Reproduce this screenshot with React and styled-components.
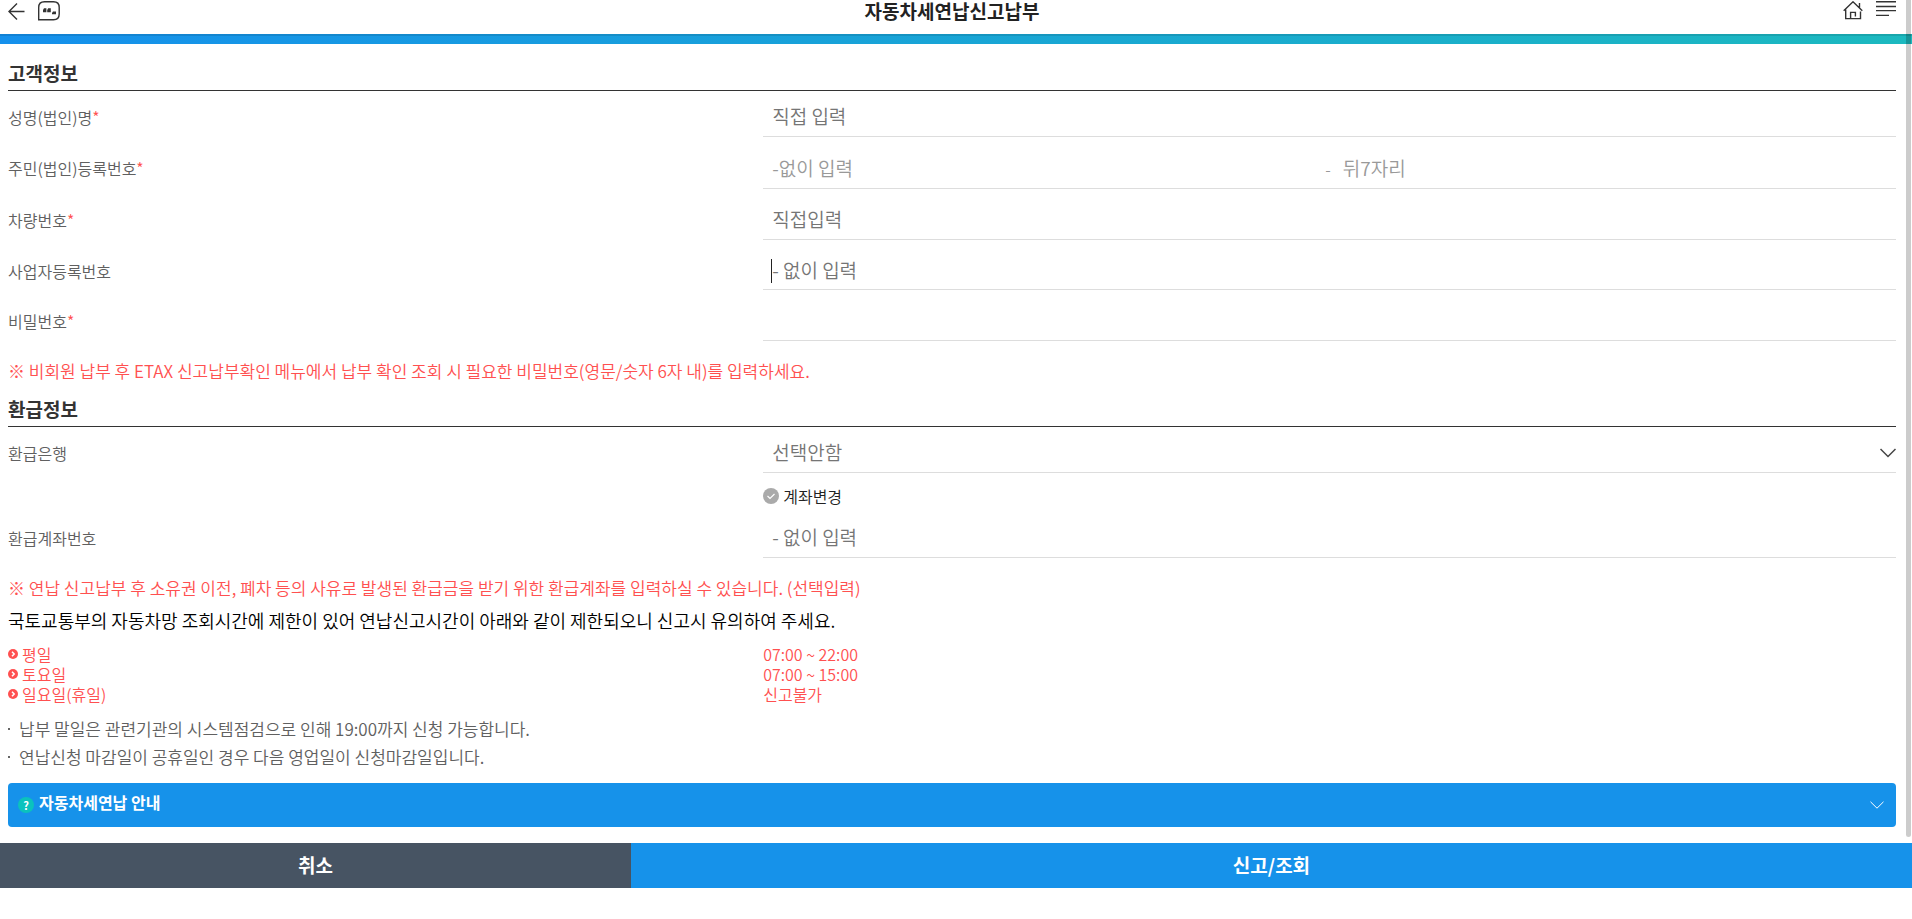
import { useState } from 'react';
import styled, { createGlobalStyle } from 'styled-components';

const App = () => {
    const [changeAccount, setChangeAccount] = useState(false);

    return (
        <>
            <GlobalStyle />
            <Header>
                <HeaderGroup>
                    <IconButton type="button" aria-label="뒤로">
                        <svg width="17" height="19" viewBox="0 0 17 19">
                            <path d="M16.5 9.5H1M9 1.5L1 9.5L9 17.5" />
                        </svg>
                    </IconButton>
                    <IconButton type="button" aria-label="상담">
                        <svg width="22" height="20" viewBox="0 0 22 20">
                            <path d="M.7 18.8V6.5Q.7 .8 6.5 .8H15.5Q21.2 .8 21.2 6.5V13Q21.2 18.8 15.5 18.8Z" />
                            <path className="fill" d="M5 9L6 7.2H8.4V11.2H5ZM9.2 9L10.2 7.2H12.8V11.2H9.2ZM14 12L15 10.4H18V13.2H14Z" />
                        </svg>
                    </IconButton>
                </HeaderGroup>
                <h1>자동차세연납신고납부</h1>
                <HeaderGroup $end>
                    <IconButton type="button" aria-label="홈">
                        <svg width="20" height="20" viewBox="0 0 20 20">
                            <path d="M.7 9.8L10 .8L19.3 9.8M2.7 8.4V17.6H17.5V10.5M7.6 17.6V11.4H12.4V15.5M16.5 7V2" />
                        </svg>
                    </IconButton>
                    <IconButton type="button" aria-label="메뉴">
                        <svg width="20" height="20" viewBox="0 0 20 20">
                            <path d="M0 .7H20M0 5.5H20M0 9.6H20M0 14.4H13" />
                        </svg>
                    </IconButton>
                </HeaderGroup>
            </Header>
            <GradientBar />

            <Content>
                <SectionTitle>고객정보</SectionTitle>
                <Fields>
                    <Row>
                        <Label htmlFor="name">성명(법인)명<em>*</em></Label>
                        <Field><Input id="name" placeholder="직접 입력" /></Field>
                    </Row>
                    <Row $height="40px">
                        <Label htmlFor="regFront">주민(법인)등록번호<em>*</em></Label>
                        <Field>
                            <Input id="regFront" placeholder="-없이 입력" $light />
                            <Dash>-</Dash>
                            <Input aria-label="뒤7자리" placeholder="뒤7자리" $light />
                        </Field>
                    </Row>
                    <Row>
                        <Label htmlFor="carNo">차량번호<em>*</em></Label>
                        <Field><Input id="carNo" placeholder="직접입력" /></Field>
                    </Row>
                    <Row $height="38px">
                        <Label htmlFor="bizNo">사업자등록번호</Label>
                        <Field>
                            <Caret />
                            <Input id="bizNo" placeholder="- 없이 입력" />
                        </Field>
                    </Row>
                    <Row>
                        <Label htmlFor="pw">비밀번호<em>*</em></Label>
                        <Field><Input id="pw" type="password" /></Field>
                    </Row>
                </Fields>
                <Notice>※ 비회원 납부 후 ETAX 신고납부확인 메뉴에서 납부 확인 조회 시 필요한 비밀번호(영문/숫자 6자 내)를 입력하세요.</Notice>

                <SectionTitle>환급정보</SectionTitle>
                <Fields>
                    <Row>
                        <Label htmlFor="bank">환급은행</Label>
                        <Field>
                            <Select id="bank">
                                <option>선택안함</option>
                            </Select>
                            <SelectArrow width="16" height="10" viewBox="0 0 16 10">
                                <path d="M.5 1L8 8.5L15.5 1" />
                            </SelectArrow>
                        </Field>
                    </Row>
                </Fields>
                <CheckLabel>
                    <input
                        type="checkbox"
                        checked={changeAccount}
                        onChange={(e) => setChangeAccount(e.target.checked)}
                    />
                    <CheckIcon $on={changeAccount} width="16" height="16" viewBox="0 0 16 16">
                        <circle cx="8" cy="8" r="8" />
                        <path d="M4.5 8L7 10.4L11.5 6" />
                    </CheckIcon>
                    계좌변경
                </CheckLabel>
                <Row>
                    <Label htmlFor="accountNo">환급계좌번호</Label>
                    <Field><Input id="accountNo" placeholder="- 없이 입력" /></Field>
                </Row>
                <Notice>※ 연납 신고납부 후 소유권 이전, 폐차 등의 사유로 발생된 환급금을 받기 위한 환급계좌를 입력하실 수 있습니다. (선택입력)</Notice>

                <Guide>국토교통부의 자동차망 조회시간에 제한이 있어 연납신고시간이 아래와 같이 제한되오니 신고시 유의하여 주세요.</Guide>
                <Hours>
                    {HOURS.map(([day, time]) => (
                        <div key={day}>
                            <dt>
                                <svg width="10" height="10" viewBox="0 0 10 10">
                                    <circle cx="5" cy="5" r="5" />
                                    <path d="M4 2.8L6.2 5L4 7.2" />
                                </svg>
                                {day}
                            </dt>
                            <dd>{time}</dd>
                        </div>
                    ))}
                </Hours>
                <Notes>
                    <li>납부 말일은 관련기관의 시스템점검으로 인해 19:00까지 신청 가능합니다.</li>
                    <li>연납신청 마감일이 공휴일인 경우 다음 영업일이 신청마감일입니다.</li>
                </Notes>
                <Accordion type="button">
                    <Question>?</Question>
                    <AccordionText>자동차세연납 안내</AccordionText>
                    <svg width="14" height="8" viewBox="0 0 14 8">
                        <path d="M.5 .8L7 7.2L13.5 .8" />
                    </svg>
                </Accordion>
            </Content>

            <Footer>
                <FooterButton type="button" $bg="#475463">취소</FooterButton>
                <FooterButton type="button" $bg="#1692ea">신고/조회</FooterButton>
            </Footer>
            <ScrollThumb />
        </>
    );
};

const HOURS = [
    ['평일', '07:00 ~ 22:00'],
    ['토요일', '07:00 ~ 15:00'],
    ['일요일(휴일)', '신고불가'],
];

const GlobalStyle = createGlobalStyle`
    * {
        box-sizing: border-box;
        margin: 0;
        padding: 0;
    }

    body {
        background-color: #fff;
        color: #222;
        font-family: "Noto Sans CJK KR", sans-serif;
        font-size: 16px;
        font-weight: 350;
    }

    button, input, select {
        border: none;
        background: none;
        font: inherit;
        color: inherit;
    }
`;

const Header = styled.header`
    display: grid;
    grid-template-columns: 1fr auto 1fr;
    height: 34px;
    padding: 0 16px 0 8px;

        & h1{
            font-size: 19px;
            font-weight: 700;
            line-height: 22px;
        }
`;

const HeaderGroup = styled.div`
    display: flex;
    align-items: flex-start;
    justify-content: ${(props) => (props.$end ? 'flex-end' : 'flex-start')};
    gap: 13px;
`;

const IconButton = styled.button`
    display: flex;
    align-items: center;
    height: 22px;
    cursor: pointer;

        & svg{
            fill: none;
            stroke: #333;
            stroke-width: 1.4;
        }

        & .fill{
            fill: #333;
            stroke: none;
        }
`;

const GradientBar = styled.div`
    height: 10px;
    border-top: 2px solid rgba(0, 0, 0, 0.1);
    background: linear-gradient(to right, #1590ec, #1cb9bf) border-box;
`;

const Content = styled.main`
    padding: 13px 16px 16px 8px;
`;

const SectionTitle = styled.h2`
    height: 34px;
    border-bottom: 1px solid #333;
    color: #333;
    font-size: 19px;
    font-weight: 700;
    line-height: 32px;
`;

const Fields = styled.div`
    display: flex;
    flex-direction: column;
    gap: 12px;
    padding-top: 7px;
`;

const Row = styled.div`
    display: grid;
    grid-template-columns: 40% 60%;
    height: ${(props) => props.$height || '39px'};
`;

const Label = styled.label`
    color: #606060;
    line-height: 38px;

        & em{
            color: #ff5050;
            font-style: normal;
        }
`;

const Field = styled.div`
    position: relative;
    display: flex;
    align-items: center;
    border-bottom: 1px solid #ddd;
`;

const Input = styled.input`
    flex: 1;
    min-width: 0;
    height: 37px;
    padding: 0 9px 3px;
    font-size: 19px;
    outline: none;

        &::placeholder{
            color: ${(props) => (props.$light ? '#999' : '#757575')};
            opacity: 1;
        }
`;

const Dash = styled.span`
    margin-right: 3px;
    color: #999;
`;

const Caret = styled.span`
    position: absolute;
    left: 8px;
    width: 1px;
    height: 24px;
    background-color: #222;
`;

const Select = styled.select`
    width: 100%;
    height: 37px;
    padding: 0 9px 3px;
    appearance: none;
    color: #757575;
    font-size: 19px;
`;

const SelectArrow = styled.svg`
    position: absolute;
    right: 0;
    fill: none;
    stroke: #444;
    stroke-width: 1.5;
    pointer-events: none;
`;

const CheckLabel = styled.label`
    display: flex;
    align-items: center;
    gap: 4px;
    height: 46px;
    margin-left: 40%;

        & input{
            position: absolute;
            opacity: 0;
        }
`;

const CheckIcon = styled.svg`
    fill: ${(props) => (props.$on ? '#1692ea' : '#aaa')};

        & path{
            fill: none;
            stroke: #fff;
            stroke-width: 1.2;
        }
`;

const Notice = styled.p`
    margin: 18px 0 10px;
    color: #ff5050;
    font-size: 17px;
    line-height: 24px;
`;

const Guide = styled.p`
    color: #000;
    font-size: 18px;
    line-height: 20px;
`;

const Hours = styled.dl`
    margin-top: 14px;
    color: #ff5050;
    line-height: 20px;

        & div{
            display: grid;
            grid-template-columns: 40% 60%;
        }

        & dt{
            display: flex;
            align-items: center;
            gap: 4px;
        }

        & svg{
            fill: #ff5050;
        }

        & path{
            fill: none;
            stroke: #fff;
            stroke-width: 1.5;
        }
`;

const Notes = styled.ul`
    margin: 11px 0 12px;
    color: #606060;
    font-size: 17px;
    line-height: 28px;
    list-style: none;

        & li{
            display: flex;
            align-items: center;
            gap: 9px;
        }

        & li::before{
            content: '';
            width: 2px;
            height: 2px;
            background-color: #666;
        }
`;

const Accordion = styled.button`
    display: flex;
    align-items: center;
    gap: 5px;
    width: 100%;
    height: 44px;
    padding: 0 12px 0 10px;
    border-radius: 4px;
    background-color: #1692ea;
    color: #fff;
    font-weight: 700;
    cursor: pointer;

        & svg{
            margin-left: auto;
            fill: none;
            stroke: #fff;
        }
`;

const AccordionText = styled.span`
    padding-bottom: 6px;
`;

const Question = styled.span`
    width: 16px;
    height: 16px;
    border-radius: 50%;
    background-color: #0bc2bd;
    font-size: 11px;
    line-height: 16px;
`;

const Footer = styled.footer`
    display: grid;
    grid-template-columns: 33% 67%;
`;

const FooterButton = styled.button`
    height: 45px;
    padding-bottom: 2px;
    background-color: ${(props) => props.$bg};
    color: #fff;
    font-size: 19px;
    font-weight: 700;
    cursor: pointer;
`;

const ScrollThumb = styled.div`
    position: absolute;
    top: 0;
    right: 1px;
    width: 5px;
    height: 837px;
    border-radius: 0 0 3px 3px;
    background-color: rgba(0, 0, 0, 0.2);
`;

export default App;
